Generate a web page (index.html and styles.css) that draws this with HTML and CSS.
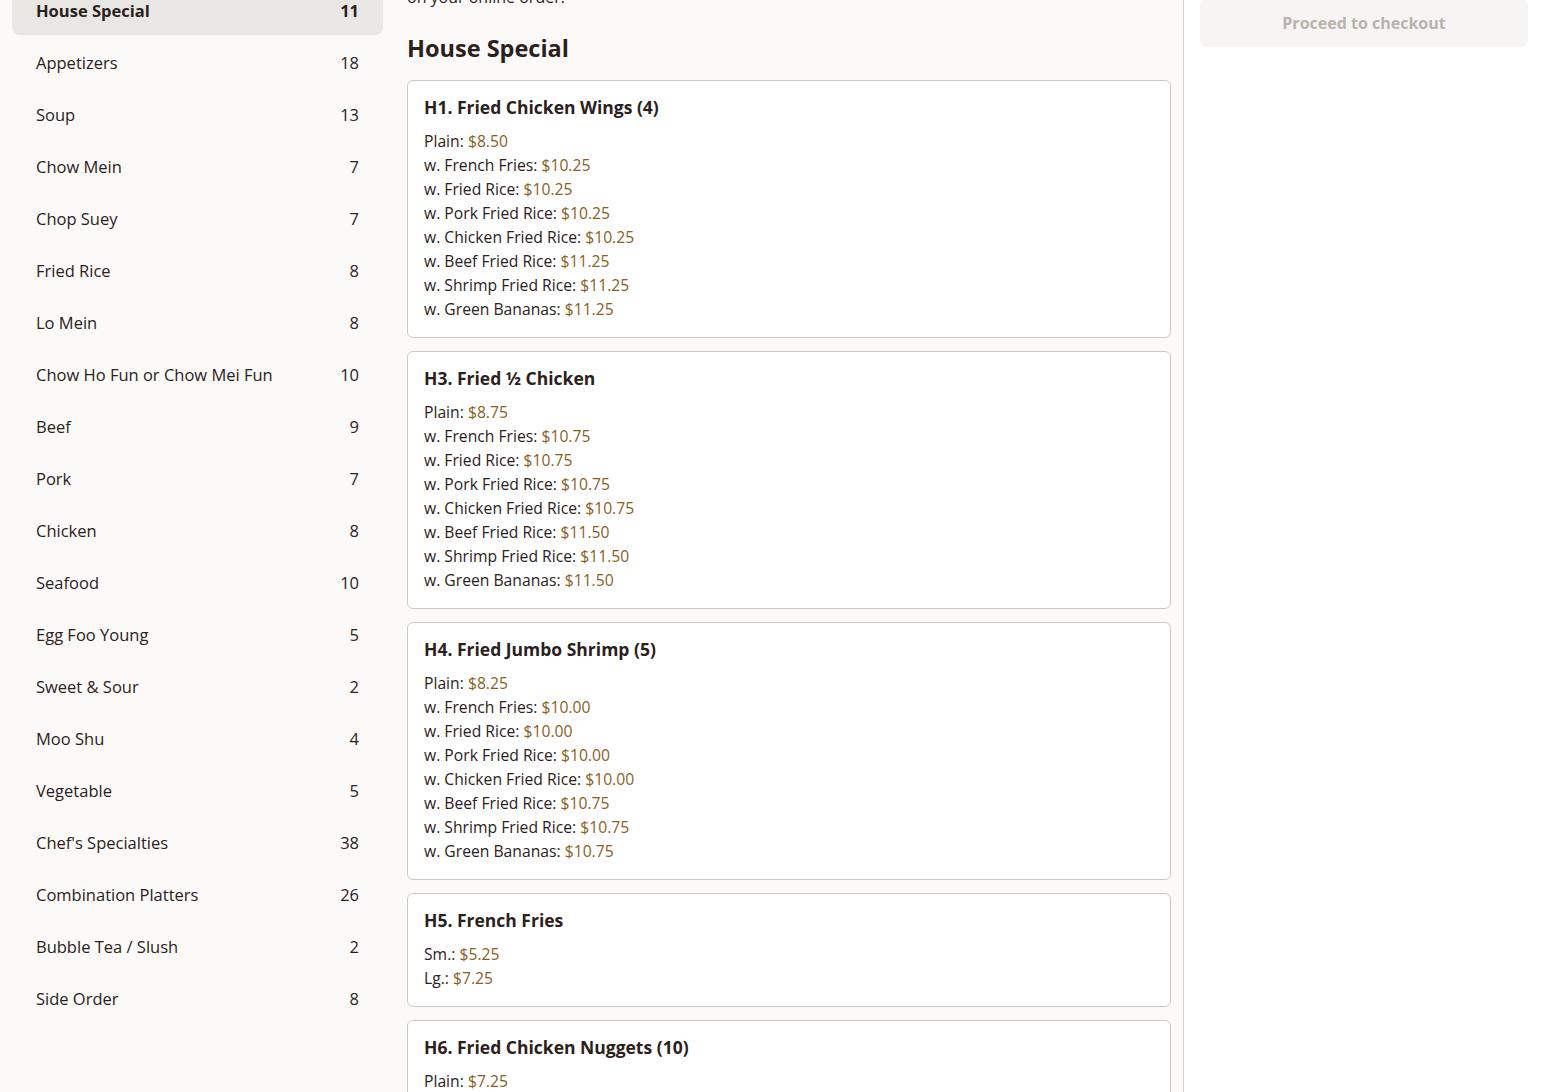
FILE: index.html
```html
<!DOCTYPE html>
<html lang="en">
<head>
<meta charset="utf-8">
<title>Menu</title>
<link rel="stylesheet" href="styles.css">
</head>
<body>
<div class="page">
  <aside class="sidebar">
    <ul class="cats">
      <li class="cat active"><span>House Special</span><span>11</span></li>
      <li class="cat"><span>Appetizers</span><span>18</span></li>
      <li class="cat"><span>Soup</span><span>13</span></li>
      <li class="cat"><span>Chow Mein</span><span>7</span></li>
      <li class="cat"><span>Chop Suey</span><span>7</span></li>
      <li class="cat"><span>Fried Rice</span><span>8</span></li>
      <li class="cat"><span>Lo Mein</span><span>8</span></li>
      <li class="cat"><span>Chow Ho Fun or Chow Mei Fun</span><span>10</span></li>
      <li class="cat"><span>Beef</span><span>9</span></li>
      <li class="cat"><span>Pork</span><span>7</span></li>
      <li class="cat"><span>Chicken</span><span>8</span></li>
      <li class="cat"><span>Seafood</span><span>10</span></li>
      <li class="cat"><span>Egg Foo Young</span><span>5</span></li>
      <li class="cat"><span>Sweet &amp; Sour</span><span>2</span></li>
      <li class="cat"><span>Moo Shu</span><span>4</span></li>
      <li class="cat"><span>Vegetable</span><span>5</span></li>
      <li class="cat"><span>Chef's Specialties</span><span>38</span></li>
      <li class="cat"><span>Combination Platters</span><span>26</span></li>
      <li class="cat"><span>Bubble Tea / Slush</span><span>2</span></li>
      <li class="cat"><span>Side Order</span><span>8</span></li>
    </ul>
  </aside>
  <main class="menu">
    <p class="intro">on your online order.</p>
    <h2 class="section-title">House Special</h2>
    <div class="cards">
      <div class="card">
        <h3 class="item-name">H1. Fried Chicken Wings (4)</h3>
        <ul class="prices">
          <li>Plain: <span class="price">$8.50</span></li>
          <li>w. French Fries: <span class="price">$10.25</span></li>
          <li>w. Fried Rice: <span class="price">$10.25</span></li>
          <li>w. Pork Fried Rice: <span class="price">$10.25</span></li>
          <li>w. Chicken Fried Rice: <span class="price">$10.25</span></li>
          <li>w. Beef Fried Rice: <span class="price">$11.25</span></li>
          <li>w. Shrimp Fried Rice: <span class="price">$11.25</span></li>
          <li>w. Green Bananas: <span class="price">$11.25</span></li>
        </ul>
      </div>
      <div class="card">
        <h3 class="item-name">H3. Fried ½ Chicken</h3>
        <ul class="prices">
          <li>Plain: <span class="price">$8.75</span></li>
          <li>w. French Fries: <span class="price">$10.75</span></li>
          <li>w. Fried Rice: <span class="price">$10.75</span></li>
          <li>w. Pork Fried Rice: <span class="price">$10.75</span></li>
          <li>w. Chicken Fried Rice: <span class="price">$10.75</span></li>
          <li>w. Beef Fried Rice: <span class="price">$11.50</span></li>
          <li>w. Shrimp Fried Rice: <span class="price">$11.50</span></li>
          <li>w. Green Bananas: <span class="price">$11.50</span></li>
        </ul>
      </div>
      <div class="card">
        <h3 class="item-name">H4. Fried Jumbo Shrimp (5)</h3>
        <ul class="prices">
          <li>Plain: <span class="price">$8.25</span></li>
          <li>w. French Fries: <span class="price">$10.00</span></li>
          <li>w. Fried Rice: <span class="price">$10.00</span></li>
          <li>w. Pork Fried Rice: <span class="price">$10.00</span></li>
          <li>w. Chicken Fried Rice: <span class="price">$10.00</span></li>
          <li>w. Beef Fried Rice: <span class="price">$10.75</span></li>
          <li>w. Shrimp Fried Rice: <span class="price">$10.75</span></li>
          <li>w. Green Bananas: <span class="price">$10.75</span></li>
        </ul>
      </div>
      <div class="card">
        <h3 class="item-name">H5. French Fries</h3>
        <ul class="prices">
          <li>Sm.: <span class="price">$5.25</span></li>
          <li>Lg.: <span class="price">$7.25</span></li>
        </ul>
      </div>
      <div class="card">
        <h3 class="item-name">H6. Fried Chicken Nuggets (10)</h3>
        <ul class="prices">
          <li>Plain: <span class="price">$7.25</span></li>
          <li>w. French Fries: <span class="price">$9.00</span></li>
        </ul>
      </div>
    </div>
  </main>
  <aside class="cart">
    <button class="checkout" type="button">Proceed to checkout</button>
  </aside>
</div>
</body>
</html>
```
FILE: styles.css
```css
* { box-sizing: border-box; }
html, body { margin: 0; padding: 0; }
body {
  font-family: "Open Sans", "Lato", sans-serif;
  color: #2b211c;
  background: #fbfaf8;
  height: 1092px;
  overflow: hidden;
}
.page {
  display: grid;
  grid-template-columns: 395px 789px 1fr;
  height: 1092px;
  overflow: hidden;
}
.sidebar {
  padding: 0 12px;
}
.cats {
  list-style: none;
  margin: -15px 0 0;
  padding: 0;
  display: flex;
  flex-direction: column;
  gap: 2px;
}
.cat {
  display: flex;
  justify-content: space-between;
  align-items: center;
  height: 50px;
  padding: 0 24px;
  font-size: 16.5px;
  border-radius: 8px;
  color: #2b211c;
}
.cat.active {
  background: #e8e7e4;
  font-weight: 700;
}
.menu {
  padding: 0 12px;
  border-right: 1px solid #d6d3cf;
  overflow: hidden;
}
.intro {
  margin: -15px 0 0;
  font-size: 16px;
  line-height: 24px;
}
.section-title {
  margin: 23px 0 16px;
  font-size: 23.5px;
  line-height: 32px;
  font-weight: 700;
}
.cards {
  display: flex;
  flex-direction: column;
  gap: 13px;
}
.card {
  background: #fff;
  border: 1px solid #cdcac5;
  border-radius: 6px;
  padding: 14px 16px 16px;
}
.item-name {
  margin: 0 0 10px;
  font-size: 17.5px;
  line-height: 24px;
  font-weight: 700;
}
.prices {
  list-style: none;
  margin: 0;
  padding: 0;
  font-size: 15.7px;
  line-height: 24px;
}
.price { color: #87611f; }
.cart {
  background: #fff;
  padding: 0 16px;
}
.checkout {
  display: block;
  width: 100%;
  height: 48px;
  margin-top: -1px;
  border: none;
  border-radius: 8px;
  background: #f6f5f3;
  color: #b8b3ac;
  font-family: inherit;
  font-size: 16px;
  font-weight: 700;
}
```
